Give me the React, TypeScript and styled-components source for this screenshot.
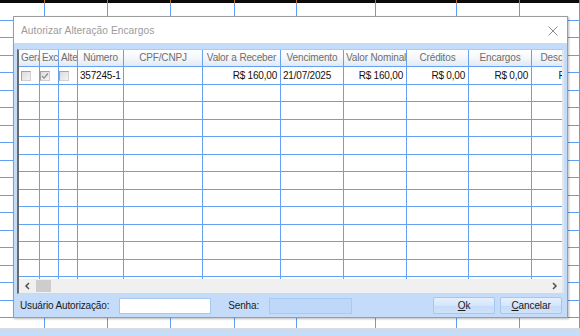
import React from "react";
import styled, { createGlobalStyle } from "styled-components";

const GlobalStyle = createGlobalStyle`
  html, body { margin: 0; padding: 0; overflow: hidden; background: #ffffff; }
  body { font-family: "Liberation Sans", Arial, sans-serif; }
  * { box-sizing: border-box; }
`;

const Page = styled.div`
  position: relative;
  width: 580px;
  height: 336px;
  overflow: hidden;
  display: flex;
  flex-direction: column;
  background: #ffffff;
`;

const TopBar = styled.div`
  height: 3px;
  display: flex;
  background: #0a0a0a;
  flex: none;
`;

const TopTick = styled.div<{ $w: number }>`
  width: ${(p) => p.$w}px;
  flex: none;
  border-right: 1px solid #b8732e;
`;

const BgGrid = styled.div`
  flex: 1;
  overflow: hidden;
  display: flex;
  flex-direction: column;
`;

const BgRow = styled.div<{ $h: number }>`
  height: ${(p) => p.$h}px;
  flex: none;
  display: flex;
  border-bottom: 1px solid #5f9ef2;
`;

const BgCell = styled.div<{ $w: number }>`
  width: ${(p) => p.$w}px;
  flex: none;
  border-right: 1px solid #5f9ef2;
`;

const StatusBar = styled.div`
  height: 8px;
  flex: none;
  border-top: 1px solid #dcdcdc;
  background: #c6ddf9;
`;

const Dialog = styled.div`
  position: absolute;
  left: 13px;
  top: 16px;
  width: 555px;
  height: 302px;
  border: 1px solid #9c9c9c;
  box-shadow: 1px 1px 2px rgba(0, 0, 0, 0.28);
  display: flex;
  flex-direction: column;
  background: #c4dcf9;
`;

const TitleBar = styled.div`
  height: 26px;
  flex: none;
  background: #ffffff;
  display: flex;
  align-items: center;
  justify-content: space-between;
  padding: 1px 9px 0 7px;
`;

const Title = styled.span`
  font-size: 10.2px;
  color: #9b9b9b;
  letter-spacing: 0.05px;
`;

const CloseIcon = styled.svg`
  width: 10px;
  height: 10px;
  display: block;
`;

const Body = styled.div`
  flex: 1;
  display: flex;
  flex-direction: column;
  padding: 6px 3px 0 3px;
`;

const GridBox = styled.div`
  height: 245px;
  flex: none;
  display: flex;
  flex-direction: column;
  background: #ffffff;
  border-left: 2px solid #6a6a6a;
  border-right: 2px solid #e6e6e6;
  border-top: 1px solid #a9ccf6;
  border-bottom: 1px solid #d6d6d6;
`;

const GridView = styled.div`
  flex: 1;
  overflow: hidden;
  display: flex;
  flex-direction: column;
`;

const HeaderRow = styled.div`
  height: 17px;
  flex: none;
  display: flex;
  background: linear-gradient(#ffffff, #f3f6fa 55%, #e1e9f4);
  border-bottom: 1px solid #64a0f4;
`;

const HeaderCell = styled.div<{ $w: number }>`
  width: ${(p) => p.$w}px;
  flex: none;
  border-right: 1px solid #64a0f4;
  padding: 0 2px;
  font-size: 10px;
  line-height: 16px;
  color: #6e6e6e;
  text-align: center;
  white-space: nowrap;
  overflow: hidden;
  letter-spacing: -0.15px;
`;

const DataRow = styled.div<{ $h: number }>`
  height: ${(p) => p.$h}px;
  flex: none;
  display: flex;
  border-bottom: 1px solid #64a0f4;
`;

const DataCell = styled.div<{ $w: number; $align?: string }>`
  width: ${(p) => p.$w}px;
  flex: none;
  border-right: 1px solid #64a0f4;
  padding: 0 3px 0 2px;
  font-size: 10px;
  line-height: 17px;
  color: #111111;
  text-align: ${(p) => p.$align || "left"};
  white-space: nowrap;
  overflow: hidden;
  letter-spacing: -0.2px;
`;

const CheckCell = styled.div<{ $w: number; $pad: number }>`
  width: ${(p) => p.$w}px;
  flex: none;
  border-right: 1px solid #64a0f4;
  padding-left: ${(p) => p.$pad}px;
  display: flex;
  align-items: center;
`;

const CheckBox = styled.div`
  width: 10px;
  height: 10px;
  border: 1px solid #a3a3a3;
  border-right-color: #d0d0d0;
  border-bottom-color: #d0d0d0;
  background: linear-gradient(135deg, #dcdcdc, #f4f4f4);
  display: flex;
  align-items: center;
  justify-content: center;
`;

const CheckMark = styled.svg`
  width: 8px;
  height: 8px;
  display: block;
`;

const HScroll = styled.div`
  height: 14px;
  flex: none;
  background: #f0f0f0;
  display: flex;
  align-items: center;
  padding: 0 4px 0 5px;
`;

const ArrowIcon = styled.svg`
  width: 7px;
  height: 8px;
  display: block;
  flex: none;
`;

const Thumb = styled.div`
  width: 15px;
  height: 12px;
  background: #cdcdcd;
  margin-left: 5px;
  flex: none;
`;

const Spacer = styled.div`
  flex: 1;
`;

const Footer = styled.div`
  flex: 1;
  display: flex;
  align-items: center;
  padding: 0 2px 0 3px;
`;

const Label = styled.span<{ $ml?: number }>`
  font-size: 10px;
  color: #1a1a1a;
  margin-left: ${(p) => p.$ml || 0}px;
  letter-spacing: -0.15px;
  white-space: nowrap;
`;

const TextInput = styled.div<{ $w: number; $ml: number; $disabled?: boolean }>`
  width: ${(p) => p.$w}px;
  height: 16px;
  margin-left: ${(p) => p.$ml}px;
  flex: none;
  background: ${(p) => (p.$disabled ? "#bdd8f8" : "#ffffff")};
  border: 1px solid ${(p) => (p.$disabled ? "#abc9ef" : "#a9c7ee")};
`;

const Button = styled.div<{ $ml: number }>`
  width: 62px;
  height: 17px;
  margin-left: ${(p) => p.$ml}px;
  flex: none;
  border: 1px solid #a7c6ec;
  border-radius: 2px;
  background: linear-gradient(#e6f0fc, #d5e6fb 50%, #c3dbf8 51%, #cfe2fa);
  font-size: 10px;
  color: #1a1a1a;
  display: flex;
  align-items: center;
  justify-content: center;
  letter-spacing: -0.1px;
`;

const bgCols = [45, 63, 63, 64, 62, 79, 81, 63, 60];
const bgRows = [18, 17, 18, 17, 18, 17, 18, 17, 18, 17, 18, 17, 18, 17, 18, 17, 18, 17, 18];

const cols = [
  { key: "ger", label: "Gerar", w: 21 },
  { key: "exc", label: "Excluir", w: 19 },
  { key: "alt", label: "Alterar", w: 19 },
  { key: "num", label: "Número", w: 46 },
  { key: "cpf", label: "CPF/CNPJ", w: 79 },
  { key: "vr", label: "Valor a Receber", w: 78 },
  { key: "venc", label: "Vencimento", w: 63 },
  { key: "vn", label: "Valor Nominal", w: 63 },
  { key: "cred", label: "Créditos", w: 62 },
  { key: "enc", label: "Encargos", w: 63 },
  { key: "desc", label: "Descontos", w: 64 },
];

const emptyRowHeights = [17, 18, 17, 18, 17, 18, 17, 18, 17, 18, 17, 18];

const Check = ({ checked }: { checked?: boolean }) => (
  <CheckBox>
    {checked && (
      <CheckMark viewBox="0 0 8 8">
        <path d="M1 4.2 L3 6.2 L7 1.5" fill="none" stroke="#8a8a8a" strokeWidth="1.2" />
      </CheckMark>
    )}
  </CheckBox>
);

export default function App() {
  return (
    <>
      <GlobalStyle />
      <Page>
        <TopBar>
          {bgCols.map((w, i) => (
            <TopTick key={i} $w={w} />
          ))}
        </TopBar>
        <BgGrid>
          {bgRows.map((h, r) => (
            <BgRow key={r} $h={h}>
              {bgCols.map((w, i) => (
                <BgCell key={i} $w={w} />
              ))}
            </BgRow>
          ))}
        </BgGrid>
        <StatusBar />

        <Dialog>
          <TitleBar>
            <Title>Autorizar Alteração Encargos</Title>
            <CloseIcon viewBox="0 0 10 10">
              <path d="M0.5 0.5 L9.5 9.5 M9.5 0.5 L0.5 9.5" stroke="#8e8e8e" strokeWidth="1" fill="none" />
            </CloseIcon>
          </TitleBar>
          <Body>
            <GridBox>
              <GridView>
                <HeaderRow>
                  {cols.map((c) => (
                    <HeaderCell key={c.key} $w={c.w}>
                      {c.label}
                    </HeaderCell>
                  ))}
                </HeaderRow>
                <DataRow $h={18}>
                  <CheckCell $w={21} $pad={2}>
                    <Check />
                  </CheckCell>
                  <CheckCell $w={19} $pad={0}>
                    <Check checked />
                  </CheckCell>
                  <CheckCell $w={19} $pad={0}>
                    <Check />
                  </CheckCell>
                  <DataCell $w={46}>357245-1</DataCell>
                  <DataCell $w={79}></DataCell>
                  <DataCell $w={78} $align="right">R$ 160,00</DataCell>
                  <DataCell $w={63}>21/07/2025</DataCell>
                  <DataCell $w={63} $align="right">R$ 160,00</DataCell>
                  <DataCell $w={62} $align="right">R$ 0,00</DataCell>
                  <DataCell $w={63} $align="right">R$ 0,00</DataCell>
                  <DataCell $w={64} $align="right">R$ 0,00</DataCell>
                </DataRow>
                {emptyRowHeights.map((h, r) => (
                  <DataRow key={r} $h={h}>
                    {cols.map((c) => (
                      <DataCell key={c.key} $w={c.w} />
                    ))}
                  </DataRow>
                ))}
              </GridView>
              <HScroll>
                <ArrowIcon viewBox="0 0 7 8">
                  <path d="M5 1 L2 4 L5 7" fill="none" stroke="#505050" strokeWidth="1.5" />
                </ArrowIcon>
                <Thumb />
                <Spacer />
                <ArrowIcon viewBox="0 0 7 8">
                  <path d="M2 1 L5 4 L2 7" fill="none" stroke="#505050" strokeWidth="1.5" />
                </ArrowIcon>
              </HScroll>
            </GridBox>
            <Footer>
              <Label>Usuário Autorização:</Label>
              <TextInput $w={92} $ml={10} />
              <Label $ml={17}>Senha:</Label>
              <TextInput $w={83} $ml={10} $disabled />
              <Button $ml={81}>
                <span>
                  <u>O</u>k
                </span>
              </Button>
              <Button $ml={5}>
                <span>
                  <u>C</u>ancelar
                </span>
              </Button>
            </Footer>
          </Body>
        </Dialog>
      </Page>
    </>
  );
}
